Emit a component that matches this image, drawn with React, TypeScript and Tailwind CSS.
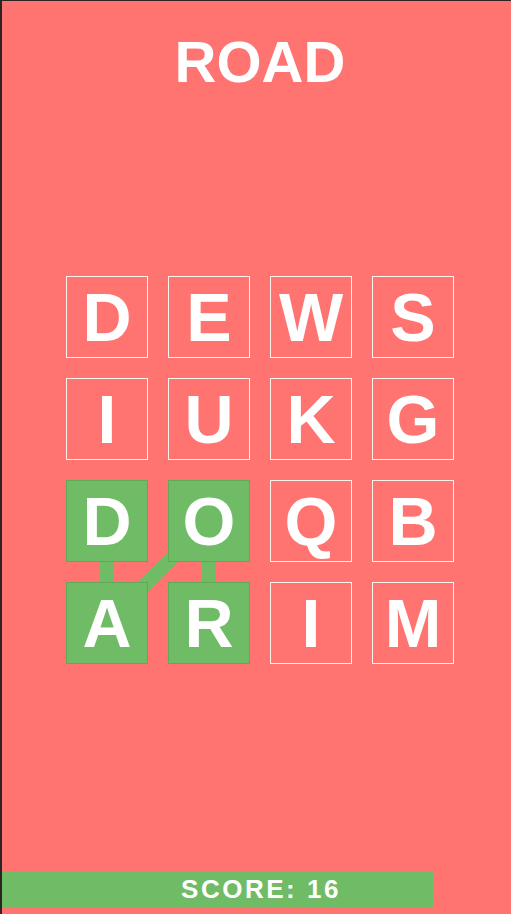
import React from "react";

const letters = ["D", "E", "W", "S", "I", "U", "K", "G", "D", "O", "Q", "B", "A", "R", "I", "M"];
// indexes of the tiles that make up the found word
const picked = [13, 9, 12, 8];

const center = (i: number) => ({ x: 41 + (i % 4) * 102, y: 41 + Math.floor(i / 4) * 102 });

const App: React.FC = () => {
  const pts = picked.map(center);

  return (
    <div className="w-[511px] h-[914px] bg-[#2b2624] pl-[2px] pt-[1px]">
      <div
        className="h-[913px] bg-[#ff7370] flex flex-col overflow-hidden"
        style={{ fontFamily: '"Liberation Sans", Arial, sans-serif' }}
      >
        <div className="w-[388px] ml-[64px] flex flex-col">
          <h1 className="mt-[32px] text-center text-white font-bold text-[58px] leading-[58px]">ROAD</h1>

          <div className="relative mt-[185px] grid grid-cols-4 gap-[20px]">
            <svg className="absolute inset-0" width="388" height="388">
              <polyline
                points={pts.map((p) => `${p.x},${p.y}`).join(" ")}
                fill="none"
                stroke="#70bb65"
                strokeWidth="14"
              />
            </svg>
            {letters.map((l, i) => {
              const on = picked.includes(i);
              return (
                <div
                  key={i}
                  className={
                    on
                      ? "relative h-[82px] flex items-center justify-center bg-[#70bb65] border border-[#62a857] text-white font-bold text-[68px] leading-none"
                      : "relative h-[82px] flex items-center justify-center border border-[#fff4ec] text-white font-bold text-[68px] leading-none"
                  }
                >
                  {l}
                </div>
              );
            })}
          </div>
        </div>

        <div className="relative mt-auto mb-[6px] h-[37px] flex items-center">
          <div className="absolute left-0 top-0 h-full w-[431px] bg-[#70bb65]" />
          <span className="relative shrink-0 w-[518px] text-center text-white font-bold text-[26px] tracking-[2.5px]">
            SCORE: 16
          </span>
        </div>
      </div>
    </div>
  );
};

export default App;
